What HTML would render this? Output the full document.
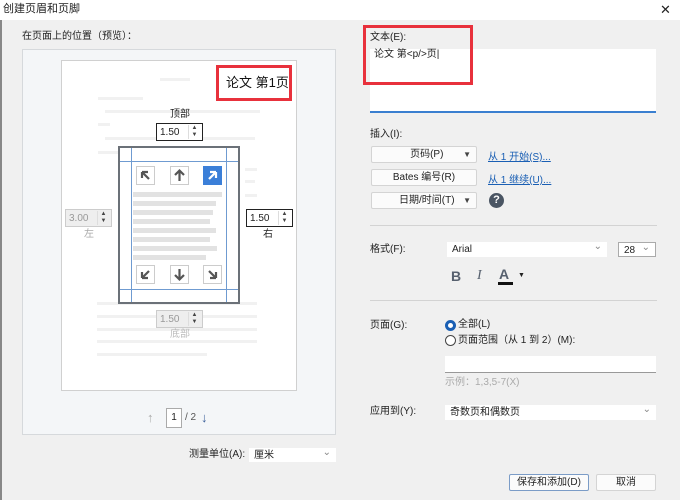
<!DOCTYPE html>
<html><head><meta charset="utf-8"><style>
*{margin:0;padding:0;box-sizing:border-box}
body{width:680px;height:500px;background:#f0f0f0;font-family:"Liberation Sans","Noto Sans CJK SC",sans-serif;font-size:9.5px;color:#222;position:relative;overflow:hidden}
.a{position:absolute}
.t{position:absolute;white-space:nowrap;line-height:1}
.spin{position:absolute;width:47px;height:18px;background:#fff;border:1.5px solid #222;font-size:10px;padding:3px 0 0 3px}
.spin.d{background:#eee;border:1px solid #ccc;color:#999}
.spin .ud{position:absolute;right:2px;top:1px;width:12px;height:14px;border-left:1px solid #ddd;font-size:6px;line-height:7px;text-align:center;color:#444}
.ib{position:absolute;width:19px;height:19px;border:1px solid #ccc;background:#fff}
.bar{position:absolute;height:5px;background:#e2e2e2;left:133px}
.btn{position:absolute;background:#fbfbfb;border:1px solid #d4d4d4;border-radius:2px;font-size:10px;text-align:center;line-height:15px}
.lnk{position:absolute;color:#1a5fb4;text-decoration:underline;font-size:10px;white-space:nowrap}
.sel{position:absolute;background:#fff;font-size:10px;padding:2px 5px;line-height:11px}
.sel:after{content:"⌄";position:absolute;right:5px;top:-1px;color:#888;font-size:10px}
.dl{position:absolute;height:3px;background:#f1f1f1}
</style></head><body>
<div class="a" style="left:0;top:0;width:680px;height:20px;background:#fff"></div>
<div class="t" style="left:3px;top:4px;font-size:11px">创建页眉和页脚</div>
<div class="t" style="left:660px;top:3px;font-size:13px">✕</div>
<div class="a" style="left:0;top:20px;width:2px;height:480px;background:#888"></div>

<div class="t" style="left:22px;top:32px;font-size:10px">在页面上的位置（预览）：</div>
<div class="a" style="left:22px;top:49px;width:314px;height:386px;background:#f4f6f8;border:1px solid #d6d9dc"></div>
<div class="a" style="left:61px;top:60px;width:236px;height:331px;background:#fff;border:1px solid #d0d0d0"></div>
<div class="dl" style="left:98px;top:97px;width:45px"></div>
<div class="dl" style="left:105px;top:110px;width:155px"></div>
<div class="dl" style="left:98px;top:123px;width:12px"></div>
<div class="dl" style="left:105px;top:137px;width:150px"></div>
<div class="dl" style="left:98px;top:151px;width:20px"></div>
<div class="dl" style="left:245px;top:168px;width:12px"></div>
<div class="dl" style="left:245px;top:180px;width:10px"></div>
<div class="dl" style="left:245px;top:194px;width:12px"></div>
<div class="dl" style="left:97px;top:315px;width:160px"></div>
<div class="dl" style="left:97px;top:328px;width:160px"></div>
<div class="dl" style="left:97px;top:340px;width:160px"></div>
<div class="dl" style="left:97px;top:353px;width:110px"></div>
<div class="dl" style="left:97px;top:302px;width:160px"></div>
<div class="dl" style="left:160px;top:78px;width:30px"></div>

<div class="a" style="left:216px;top:65px;width:76px;height:36px;border:3px solid #e8313c;background:#fff"></div>
<div class="t" style="left:226px;top:76px;font-size:13px;color:#111">论文 第1页</div>

<div class="t" style="left:170px;top:110px;font-size:10px">顶部</div>
<div class="spin" style="left:156px;top:123px">1.50<div class="ud">▲<br>▼</div></div>

<div class="a" style="left:118px;top:146px;width:122px;height:158px;border:2px solid #6b7178;background:#fff"></div>
<div class="a" style="left:131px;top:148px;width:1px;height:154px;background:#6f9bd1"></div>
<div class="a" style="left:226px;top:148px;width:1px;height:154px;background:#6f9bd1"></div>
<div class="a" style="left:120px;top:161px;width:118px;height:1px;background:#6f9bd1"></div>
<div class="a" style="left:120px;top:289px;width:118px;height:1px;background:#6f9bd1"></div>
<div class="ib" style="left:136px;top:166px"><svg width="17" height="17"><path d="M12 12L5 5M5 5v6M5 5h6" stroke="#555" stroke-width="2.2" fill="none"/></svg></div>
<div class="ib" style="left:170px;top:166px"><svg width="17" height="17"><path d="M8.5 14V4M4 8l4.5-4.5L13 8" stroke="#555" stroke-width="2.2" fill="none"/></svg></div>
<div class="ib" style="left:203px;top:166px;background:#3b7fd8;border-color:#3b7fd8"><svg width="17" height="17"><path d="M5 12l7-7M12 5v6M12 5H6" stroke="#fff" stroke-width="2.2" fill="none"/></svg></div>
<div class="ib" style="left:136px;top:265px"><svg width="17" height="17"><path d="M12 5L5 12M5 12V6M5 12h6" stroke="#555" stroke-width="2.2" fill="none"/></svg></div>
<div class="ib" style="left:170px;top:265px"><svg width="17" height="17"><path d="M8.5 3v10M4 9l4.5 4.5L13 9" stroke="#555" stroke-width="2.2" fill="none"/></svg></div>
<div class="ib" style="left:203px;top:265px"><svg width="17" height="17"><path d="M5 5l7 7M12 12V6M12 12H6" stroke="#555" stroke-width="2.2" fill="none"/></svg></div>
<div class="bar" style="top:192px;width:89px"></div>
<div class="bar" style="top:201px;width:83px"></div>
<div class="bar" style="top:210px;width:80px"></div>
<div class="bar" style="top:219px;width:77px"></div>
<div class="bar" style="top:228px;width:83px"></div>
<div class="bar" style="top:237px;width:77px"></div>
<div class="bar" style="top:246px;width:84px"></div>
<div class="bar" style="top:255px;width:73px"></div>

<div class="spin d" style="left:65px;top:209px">3.00<div class="ud">▲<br>▼</div></div>
<div class="t" style="left:84px;top:230px;font-size:10px;color:#aaa">左</div>
<div class="spin" style="left:246px;top:209px">1.50<div class="ud">▲<br>▼</div></div>
<div class="t" style="left:263px;top:230px;font-size:10px">右</div>
<div class="spin d" style="left:156px;top:310px">1.50<div class="ud">▲<br>▼</div></div>
<div class="t" style="left:170px;top:330px;font-size:10px;color:#bbb">底部</div>

<div class="t" style="left:147px;top:411px;font-size:13px;color:#aaa">↑</div>
<div class="a" style="left:166px;top:408px;width:16px;height:20px;background:#fff;border:1px solid #aaa;font-size:10px;text-align:center;line-height:18px">1</div>
<div class="t" style="left:185px;top:413px;font-size:10px;color:#555">/ 2</div>
<div class="t" style="left:201px;top:411px;font-size:13px;color:#3b5f9a;font-weight:bold">↓</div>

<div class="t" style="left:189px;top:450px;font-size:10px">测量单位(A):</div>
<div class="sel" style="left:249px;top:448px;width:87px;height:14px">厘米</div>

<div class="t" style="left:370px;top:33px;font-size:10px">文本(E):</div>
<div class="a" style="left:370px;top:49px;width:286px;height:64px;background:#fff;border-bottom:2px solid #3a7fd0"></div>
<div class="t" style="left:374px;top:50px;font-size:10px">论文 第&lt;p/&gt;页|</div>
<div class="a" style="left:363px;top:25px;width:110px;height:60px;border:3px solid #e8313c"></div>

<div class="t" style="left:370px;top:130px;font-size:10px">插入(I):</div>
<div class="btn" style="left:371px;top:146px;width:106px;height:17px">&nbsp;&nbsp;页码(P)<span style="position:absolute;right:5px;font-size:8px;color:#444">▼</span></div>
<div class="lnk" style="left:488px;top:148px">从 1 开始(S)...</div>
<div class="btn" style="left:371px;top:169px;width:106px;height:17px">Bates 编号(R)</div>
<div class="lnk" style="left:488px;top:171px">从 1 继续(U)...</div>
<div class="btn" style="left:371px;top:192px;width:106px;height:17px">&nbsp;&nbsp;日期/时间(T)<span style="position:absolute;right:5px;font-size:8px;color:#444">▼</span></div>
<div class="a" style="left:489px;top:193px;width:15px;height:15px;border-radius:50%;background:#4a5563;color:#fff;font-weight:bold;font-size:11px;text-align:center;line-height:15px">?</div>
<div class="a" style="left:370px;top:225px;width:287px;height:1px;background:#d3d3d3"></div>

<div class="t" style="left:370px;top:245px;font-size:10px">格式(F):</div>
<div class="sel" style="left:447px;top:242px;width:160px;height:15px">Arial</div>
<div class="sel" style="left:618px;top:242px;width:38px;height:15px;border:1px solid #aaa">28</div>
<div class="t" style="left:451px;top:269px;font-size:14px;font-weight:bold;color:#56606e">B</div>
<div class="t" style="left:477px;top:269px;font-size:14px;font-style:italic;color:#56606e;font-family:'Liberation Serif',serif">I</div>
<div class="t" style="left:499px;top:267px;font-size:14px;font-weight:bold;color:#56606e">A</div>
<div class="a" style="left:498px;top:282px;width:15px;height:3px;background:#111"></div>
<div class="t" style="left:518px;top:272px;font-size:7px">▼</div>
<div class="a" style="left:370px;top:300px;width:287px;height:1px;background:#d3d3d3"></div>

<div class="t" style="left:370px;top:321px;font-size:10px">页面(G):</div>
<div class="a" style="left:445px;top:320px;width:11px;height:11px;border-radius:50%;border:3px solid #1a5fb4;background:#fff"></div>
<div class="t" style="left:458px;top:320px;font-size:10px">全部(L)</div>
<div class="a" style="left:445px;top:335px;width:11px;height:11px;border-radius:50%;border:1px solid #444;background:#fff"></div>
<div class="t" style="left:458px;top:336px;font-size:10px">页面范围（从 1 到 2）(M):</div>
<div class="a" style="left:445px;top:356px;width:211px;height:17px;background:#fff;border-bottom:1px solid #999"></div>
<div class="t" style="left:445px;top:378px;font-size:10px;color:#aaa">示例：1,3,5-7(X)</div>

<div class="t" style="left:370px;top:407px;font-size:10px">应用到(Y):</div>
<div class="sel" style="left:445px;top:405px;width:211px;height:15px">奇数页和偶数页</div>

<div class="btn" style="left:509px;top:474px;width:80px;height:17px;border-color:#7b9cc7">保存和添加(D)</div>
<div class="btn" style="left:596px;top:474px;width:60px;height:17px">取消</div>
</body></html>
